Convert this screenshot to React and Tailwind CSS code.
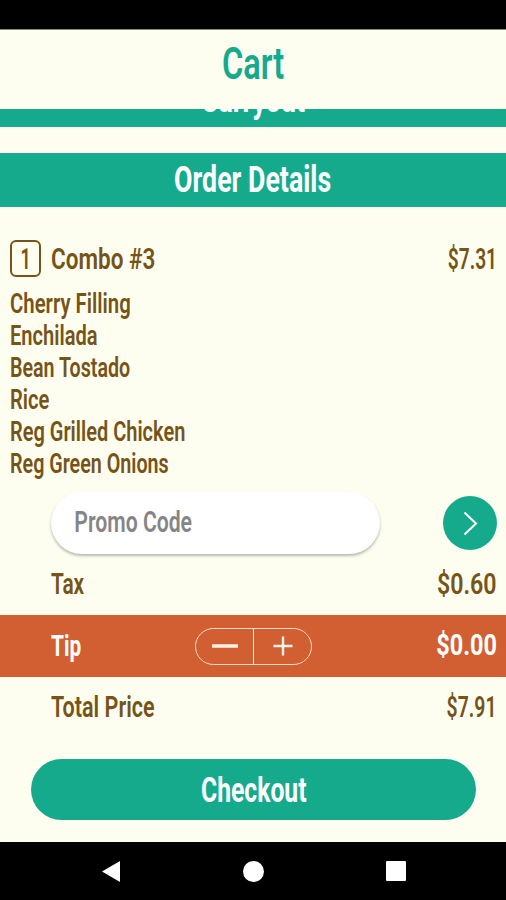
import React, { useState } from "react";

const items = [
  { name: "Cherry Filling", fit: "scale-x-[0.726]" },
  { name: "Enchilada", fit: "scale-x-[0.718]" },
  { name: "Bean Tostado", fit: "scale-x-[0.702]" },
  { name: "Rice", fit: "scale-x-[0.72]" },
  { name: "Reg Grilled Chicken", fit: "scale-x-[0.714]" },
  { name: "Reg Green Onions", fit: "scale-x-[0.704]" },
];

function Text({ children, className = "" }) {
  return (
    <span className={`inline-block whitespace-nowrap ${className}`}>
      {children}
    </span>
  );
}

function Banner({ children }) {
  return (
    <div className="h-[54px] shrink-0 bg-[#16aa8d] text-center text-white text-[37px] leading-[54px] font-bold">
      {children}
    </div>
  );
}

function App() {
  const [tip, setTip] = useState(0);
  const [promo, setPromo] = useState("");

  return (
    <div className="flex flex-col w-full h-[900px] overflow-hidden bg-[#fefef0] text-[#765417] font-['Roboto',sans-serif] font-semibold">
      <div className="h-[29px] shrink-0 bg-black" />
      <div className="h-px shrink-0 bg-[#85857b]" />

      <header className="h-[79px] shrink-0 text-center text-[#16aa8d] text-[44px] leading-[68px]">
        <Text className="scale-x-[0.74]">Cart</Text>
      </header>

      <div className="flex flex-col justify-end h-[18px] shrink-0 overflow-hidden">
        <Banner>
          <Text className="scale-x-[0.723]">Carryout</Text>
        </Banner>
      </div>

      <div className="pt-[26px]">
        <Banner>
          <Text className="scale-x-[0.723]">Order Details</Text>
        </Banner>
      </div>

      <div className="flex items-center h-9 shrink-0 mt-[33px] pl-2.5 pr-[9px] text-[30px]">
        <div className="flex items-center justify-center w-[31px] h-[37px] border-2 border-[#765417] rounded-md">
          <Text className="scale-x-[0.6]">1</Text>
        </div>
        <Text className="ml-2.5 origin-left scale-x-[0.75]">Combo #3</Text>
        <Text className="ml-auto origin-right scale-x-[0.64]">$7.31</Text>
      </div>

      <ul className="mt-3 pl-2.5 text-[28px] leading-8">
        {items.map((item) => (
          <li key={item.name} className="h-8">
            <Text className={`origin-left ${item.fit}`}>{item.name}</Text>
          </li>
        ))}
      </ul>

      <div className="flex items-center justify-between shrink-0 mt-3 pl-[51px] pr-[9px]">
        <div className="w-[329px] h-[62px] rounded-full bg-white shadow-[0_2px_3px_rgba(0,0,0,0.28)]">
          <input
            value={promo}
            onChange={(e) => setPromo(e.target.value)}
            placeholder="Promo Code"
            className="w-[400px] h-[60px] pl-8 text-[29px] origin-left scale-x-[0.73] placeholder:text-[#858585] focus:outline-none"
          />
        </div>
        <button
          type="button"
          className="flex items-center justify-center w-[54px] h-[54px] rounded-full bg-[#16aa8d]"
        >
          <svg width="54" height="54" fill="none" stroke="white" strokeWidth="2">
            <path d="M21.5 16.5L33 27.5L21.5 38.5" />
          </svg>
        </button>
      </div>

      <div className="flex items-center justify-between h-[61px] shrink-0 pl-[51px] pr-[9px] text-[29px]">
        <Text className="origin-left scale-x-[0.72]">Tax</Text>
        <Text className="origin-right scale-x-[0.8]">$0.60</Text>
      </div>

      <div className="grid grid-cols-[144px_117px_1fr] items-center h-[62px] shrink-0 bg-[#d15f32] pl-[51px] pr-[9px] text-[29px] text-white font-bold">
        <Text className="mt-px origin-left scale-x-[0.72]">Tip</Text>
        <div className="flex w-[117px] h-[37px] border-[1.5px] border-[#fbdcc4] rounded-full">
          <button
            type="button"
            onClick={() => setTip(Math.max(0, tip - 1))}
            className="flex items-center justify-center w-[58px] border-r border-[#fff0e4]"
          >
            <svg width="26" height="20" stroke="#fff3ea" strokeWidth="3.5">
              <path d="M0 10H26" />
            </svg>
          </button>
          <button
            type="button"
            onClick={() => setTip(tip + 1)}
            className="flex flex-1 items-center justify-center"
          >
            <svg width="20" height="20" stroke="#fff3ea" strokeWidth="2.4">
              <path d="M0.5 10H19.5M10 0.5V19.5" />
            </svg>
          </button>
        </div>
        <Text className="justify-self-end origin-right scale-x-[0.81]">
          ${tip.toFixed(2)}
        </Text>
      </div>

      <div className="flex items-center justify-between h-[61px] shrink-0 pl-[51px] pr-[9px] text-[29px]">
        <Text className="origin-left scale-x-[0.743]">Total Price</Text>
        <Text className="origin-right scale-x-[0.67]">$7.91</Text>
      </div>

      <button
        type="button"
        className="h-[61px] shrink-0 mt-[21px] ml-[31px] w-[445px] pt-1 rounded-full bg-[#16aa8d] text-white text-[35px] font-bold"
      >
        <Text className="scale-x-[0.705]">Checkout</Text>
      </button>

      <nav className="flex items-center justify-between h-[58px] shrink-0 mt-auto pl-[102px] pr-[100px] bg-black">
        <svg width="18" height="21" fill="white">
          <path d="M0 10.5L18 0V21Z" />
        </svg>
        <div className="w-[21px] h-[21px] rounded-full bg-white" />
        <div className="w-5 h-5 rounded-[1px] bg-white" />
      </nav>
    </div>
  );
}

export default App;
